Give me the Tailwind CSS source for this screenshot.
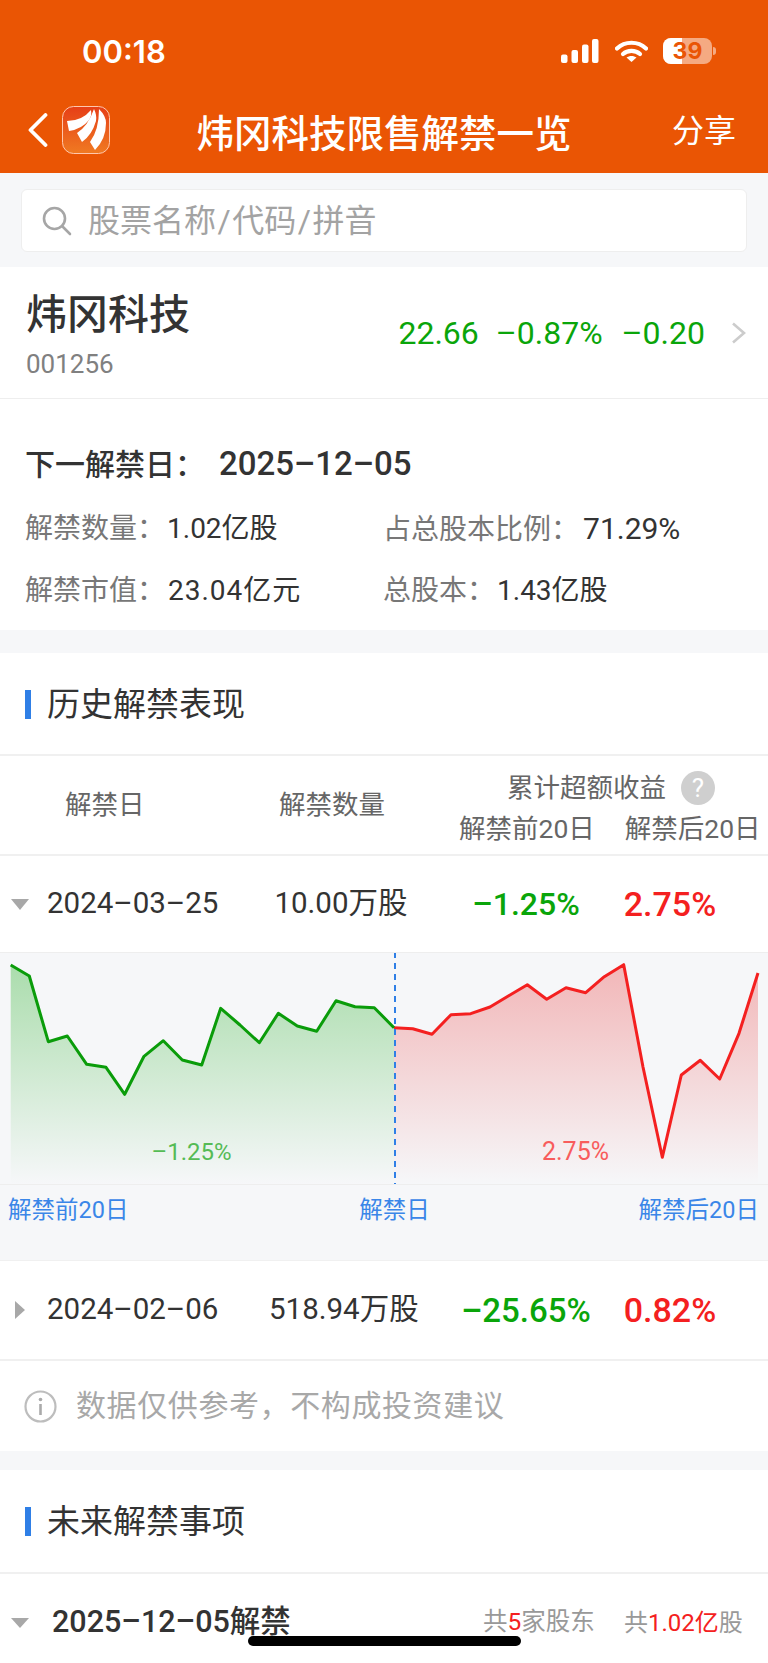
<!DOCTYPE html>
<html lang="zh">
<head>
<meta charset="utf-8">
<script src="https://cdn.jsdelivr.net/npm/@tailwindcss/browser@4"></script>
<title>炜冈科技限售解禁一览</title>
</head>
<body>
<div class="relative w-[768px] h-[1663px] overflow-hidden bg-white text-[#333] [font-family:Roboto,'Noto_Sans_CJK_SC',sans-serif]">

  <header class="h-[173px] bg-[#ea5504] text-white">
    <div class="h-[96px] flex items-center justify-between pl-[82px] pr-[52px] pt-[6px]">
      <span class="[font-family:Inter,sans-serif] font-semibold text-[31px] leading-none">00:18</span>
      <div class="flex items-center">
        <svg width="38" height="24" viewBox="0 0 38 24" fill="white" class="mr-[12px]">
          <rect x="0" y="15.5" width="6.5" height="8.5" rx="2"/><rect x="10.5" y="11" width="6.5" height="13" rx="2"/><rect x="21" y="5.5" width="6.5" height="18.5" rx="2"/><rect x="31" y="0" width="6.5" height="24" rx="2"/>
        </svg>
        <svg width="33" height="22" viewBox="0 0 33 22" fill="none" class="ml-[4px] mr-[15px]">
          <path d="M2 8.5C10 .8 23 .8 31 8.5" stroke="white" stroke-width="4.2" stroke-linecap="round"/>
          <path d="M8 14C12.5 9.8 20.5 9.8 25 14" stroke="white" stroke-width="4.2" stroke-linecap="round"/>
          <path d="M16.5 22L11.5 17.6C14.2 15.4 18.8 15.4 21.5 17.6Z" fill="white"/>
        </svg>
        <div class="relative w-[49px] h-[26px] rounded-[8px] overflow-hidden bg-white/50 flex items-center justify-center">
          <div class="absolute left-0 top-0 bottom-0 w-[19px] bg-white"></div>
          <span class="relative [font-family:Inter,sans-serif] font-bold text-[23px] leading-none text-[#ea5504]">39</span>
        </div>
        <div class="w-[3px] h-[8px] ml-[1px] rounded-r-full bg-white/50"></div>
      </div>
    </div>
    <div class="h-[77px] grid grid-cols-[1fr_auto_1fr] items-center">
      <div class="flex items-center pl-[28px] pb-[9px]">
        <svg width="20" height="34" viewBox="0 0 20 34" fill="none"><path d="M17.5 2L2.5 17L17.5 32" stroke="white" stroke-width="3.8" stroke-linecap="round" stroke-linejoin="round"/></svg>
        <svg width="48" height="48" viewBox="0 0 48 48" class="ml-[14px]">
          <defs><linearGradient id="lg" x1="0" y1="0" x2="0" y2="1"><stop offset="0" stop-color="#e63f17"/><stop offset="1" stop-color="#f07a22"/></linearGradient></defs>
          <rect x=".5" y=".5" width="47" height="47" rx="11" fill="url(#lg)" stroke="#ffc7ad"/>
          <path d="M5 15Q20 15 29 4Q30 10 27 14Q20 23 7 25Z" fill="white"/>
          <path d="M15 27Q26 20 32 3Q35 9 34 15Q30 29 20 36Z" fill="white"/>
          <path d="M28 36Q37 24 37 3Q44 10 44 17Q44 33 33 44Z" fill="white"/>
        </svg>
      </div>
      <h1 class="text-[37.5px] leading-none font-medium whitespace-nowrap">炜冈科技限售解禁一览</h1>
      <div class="text-right pr-[32px] pb-[7px] text-[32px] leading-none">分享</div>
    </div>
  </header>

  <div class="h-[94px] bg-[#f6f7f9] pt-[16px] px-[21px]">
    <div class="h-[63px] bg-white border border-[#eeeeee] rounded-[6px] flex items-center pl-[20px]">
      <svg width="30" height="30" viewBox="0 0 30 30" fill="none" stroke="#a6a6a6" stroke-width="2.6" stroke-linecap="round"><circle cx="12.5" cy="12.5" r="10.5"/><path d="M20.5 20.5L28 28"/></svg>
      <span class="ml-[16px] text-[32px] leading-none text-[#a3a3a3]">股票名称<span class="mx-[1.5px]">/</span>代码<span class="mx-[1.5px]">/</span>拼音</span>
    </div>
  </div>

  <section class="h-[132px] flex justify-between pl-[26px] pr-[22px] border-b border-[#eeeeee]">
    <div class="pt-[25px]">
      <div class="text-[41px] leading-[46px] font-medium">炜冈科技</div>
      <div class="text-[26px] leading-none mt-[13px] text-[#808080]">001256</div>
    </div>
    <div class="flex items-center text-[32px] leading-none text-[#0aa50a] whitespace-nowrap">
      <span>22.66</span>
      <span class="ml-[17px]">–0.87%</span>
      <span class="ml-[19px]">–0.20</span>
      <svg width="15" height="22" viewBox="0 0 15 22" fill="none" class="ml-[26px]"><path d="M2 1.5L13 11L2 20.5" stroke="#cccccc" stroke-width="2.6"/></svg>
    </div>
  </section>

  <section class="h-[231px] pl-[25px] pt-[46px]">
    <div class="text-[30px] leading-[38px] font-medium whitespace-nowrap">下一解禁日：<span class="text-[33px] ml-[14px]">2025–12–05</span></div>
    <div class="mt-[29px] grid grid-cols-[358px_1fr] gap-y-[29px] text-[28px] leading-[32px] text-[#777777] whitespace-nowrap">
      <div>解禁数量：<span class="text-[#333] ml-[2px]">1.02亿股</span></div>
      <div>占总股本比例：<span class="text-[#333] text-[30px] ml-[4px]">71.29%</span></div>
      <div>解禁市值：<span class="text-[#333] ml-[3px] tracking-[1px]">23.04亿元</span></div>
      <div>总股本：<span class="text-[#333] ml-[2px]">1.43亿股</span></div>
    </div>
  </section>

  <div class="h-[23px] bg-[#f6f7f9]"></div>

  <section class="h-[103px] border-b-2 border-[#f0f0f0] flex items-center pl-[25px] pt-[1px]">
    <div class="w-[6px] h-[29px] bg-[#2f7fe6]"></div>
    <h2 class="ml-[16px] text-[33px] font-normal leading-none">历史解禁表现</h2>
  </section>

  <div class="h-[100px] border-b-2 border-[#f0f0f0] relative flex text-[26.5px] leading-none text-[#666666] whitespace-nowrap">
    <div class="w-[279px] pl-[65px] flex items-center">解禁日</div>
    <div class="w-[180px] flex items-center">解禁数量</div>
    <div class="pt-[15px]">
      <div class="flex items-center pl-[48px]">
        <span>累计超额收益</span>
        <span class="ml-[15px] w-[34px] h-[34px] rounded-full bg-[#cfcfcf] text-white flex items-center justify-center text-[26px]">?</span>
      </div>
      <div class="flex mt-[11px]"><span>解禁前20日</span><span class="ml-[30px]">解禁后20日</span></div>
    </div>
  </div>

  <div class="h-[96px] flex items-center text-[29.5px] leading-none whitespace-nowrap">
    <svg width="18" height="11" viewBox="0 0 18 11" class="ml-[11px]"><path d="M0 0H18L9 11Z" fill="#a8a8a8"/></svg>
    <span class="ml-[18px] w-[225px]">2024–03–25</span>
    <span class="w-[138px] text-center">10.00万股</span>
    <span class="ml-[32px] w-[168px] text-center text-[#0aa50a] font-medium text-[32px]">–1.25%</span>
    <span class="w-[120px] text-center text-[#f42020] font-medium text-[34px]">2.75%</span>
  </div>

  <div class="h-[308px] bg-[#f6f7f9] border-t border-[#eeeeee] relative">
    <svg width="768" height="231" viewBox="0 953 768 231" class="block">
      <defs>
        <linearGradient id="gg" gradientUnits="userSpaceOnUse" x1="0" y1="965" x2="0" y2="1184"><stop offset="0" stop-color="#0aa50a" stop-opacity=".32"/><stop offset="1" stop-color="#0aa50a" stop-opacity="0"/></linearGradient>
        <linearGradient id="rg" gradientUnits="userSpaceOnUse" x1="0" y1="965" x2="0" y2="1184"><stop offset="0" stop-color="#e82020" stop-opacity=".3"/><stop offset="1" stop-color="#e82020" stop-opacity="0"/></linearGradient>
      </defs>
      <path fill="url(#gg)" d="M10.7 1184V965L29.3 976L48.3 1041.7L67.3 1036L86.7 1064.3L106 1067.3L124.7 1094.3L144 1056.3L163.3 1040.7L182.3 1060L201.7 1065L220.7 1008.3L240 1025L259.3 1042.7L278.3 1013.3L297.3 1026L316.7 1031.3L336 1000.7L355 1006.7L374.3 1007.7L394 1027.7V1184Z"/>
      <path fill="url(#rg)" d="M394 1184V1027.7L412.7 1028.7L432 1034.3L451 1014.7L470.7 1013.7L490 1007L508.3 996L527.3 984.7L546.7 999.3L566 987.7L585.7 992.7L604.3 976.7L623.7 964.7L643 1067L662.3 1157.3L681.3 1075L700.3 1060.3L719.7 1079L739 1033.3L758 973V1184Z"/>
      <polyline fill="none" stroke="#f42020" stroke-width="3" stroke-linejoin="round" points="394,1027.7 412.7,1028.7 432,1034.3 451,1014.7 470.7,1013.7 490,1007 508.3,996 527.3,984.7 546.7,999.3 566,987.7 585.7,992.7 604.3,976.7 623.7,964.7 643,1067 662.3,1157.3 681.3,1075 700.3,1060.3 719.7,1079 739,1033.3 758,973"/>
      <polyline fill="none" stroke="#0a9c0a" stroke-width="3" stroke-linejoin="round" points="10.7,965 29.3,976 48.3,1041.7 67.3,1036 86.7,1064.3 106,1067.3 124.7,1094.3 144,1056.3 163.3,1040.7 182.3,1060 201.7,1065 220.7,1008.3 240,1025 259.3,1042.7 278.3,1013.3 297.3,1026 316.7,1031.3 336,1000.7 355,1006.7 374.3,1007.7 394,1027.7"/>
      <line x1="395" y1="952" x2="395" y2="1184" stroke="#2f7fe6" stroke-width="2" stroke-dasharray="6 5"/>
      <text x="191.5" y="1160" text-anchor="middle" font-size="24" fill="#55bb55">–1.25%</text>
      <text x="575.5" y="1160" text-anchor="middle" font-size="25" fill="#f85c5c">2.75%</text>
    </svg>
    <div class="h-[75px] border-t border-[#eeeeee] flex justify-between pl-[8px] pr-[9px] pt-[14px] text-[23.5px] leading-none text-[#3a86e8] whitespace-nowrap">
      <span>解禁前20日</span>
      <span class="ml-[22px]">解禁日</span>
      <span>解禁后20日</span>
    </div>
  </div>

  <div class="h-[101px] border-t border-b-2 border-[#f0f0f0] flex items-center text-[29.5px] leading-none whitespace-nowrap">
    <svg width="10" height="18" viewBox="0 0 10 18" class="ml-[15px]"><path d="M0 0L10 9L0 18Z" fill="#a8a8a8"/></svg>
    <span class="ml-[22px] w-[222px]">2024–02–06</span>
    <span class="w-[144px] text-center">518.94万股</span>
    <span class="ml-[29px] w-[168px] text-center text-[#0aa50a] font-medium text-[33px]">–25.65%</span>
    <span class="w-[120px] text-center text-[#f42020] font-medium text-[34px]">0.82%</span>
  </div>

  <div class="h-[90px] flex items-center pl-[24px] text-[30px] leading-none text-[#a8a8a8] whitespace-nowrap">
    <svg width="33" height="33" viewBox="0 0 33 33" fill="none"><circle cx="16.5" cy="16.5" r="15" stroke="#bdbdbd" stroke-width="2.2"/><circle cx="16.5" cy="9.5" r="1.8" fill="#aaaaaa"/><path d="M16.5 14V25" stroke="#aaaaaa" stroke-width="2.6"/></svg>
    <span class="ml-[19px] tracking-[0.6px]">数据仅供参考，不构成投资建议</span>
  </div>

  <div class="h-[19px] bg-[#f6f7f9]"></div>

  <section class="h-[104px] border-b-2 border-[#f0f0f0] flex items-center pl-[25px] pt-[1px]">
    <div class="w-[6px] h-[29px] bg-[#2f7fe6]"></div>
    <h2 class="ml-[16px] text-[33px] font-normal leading-none">未来解禁事项</h2>
  </section>

  <div class="h-[97px] flex items-center whitespace-nowrap">
    <svg width="18" height="10" viewBox="0 0 18 10" class="ml-[11px]"><path d="M0 0H18L9 10Z" fill="#a8a8a8"/></svg>
    <span class="ml-[23px] w-[431px] text-[30.5px] leading-none font-medium">2025–12–05解禁</span>
    <span class="w-[141px] text-[24.5px] leading-none text-[#999999]">共<span class="text-[#f42020]">5</span>家股东</span>
    <span class="text-[24px] leading-none text-[#999999]">共<span class="text-[#f42020]">1.02亿</span>股</span>
  </div>

  <div class="absolute left-[248px] top-[1636px] w-[273px] h-[10px] rounded-full bg-black"></div>
</div>
</body>
</html>
